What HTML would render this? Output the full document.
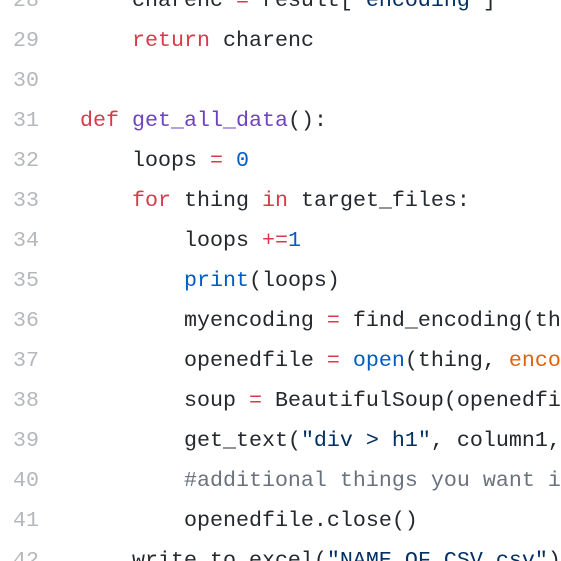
<!DOCTYPE html>
<html><head><style>
html,body{margin:0;width:561px;height:561px;overflow:hidden;background:#fff}
body{position:relative}
.w{position:absolute;top:-19px;left:0;width:561px;overflow:hidden;font-family:"Liberation Mono",monospace;font-size:21.67px;line-height:40px;color:#24292e}
.r{display:flex;height:40px;white-space:pre}
.n{width:39px;text-align:right;color:#b5b8bb;flex:none}
.c{padding-left:41px}
.k{color:#d73a49}.e{color:#6f42c1}.m{color:#005cc5}.s{color:#032f62}.cm{color:#6a737d}.p{color:#e36209}
</style></head><body><div class="w"><div class="r"><span class="n">28</span><span class="c">    charenc <span class="k">=</span> result[<span class="s">'encoding'</span>]</span></div><div class="r"><span class="n">29</span><span class="c">    <span class="k">return</span> charenc</span></div><div class="r"><span class="n">30</span><span class="c"></span></div><div class="r"><span class="n">31</span><span class="c"><span class="k">def</span> <span class="e">get_all_data</span>():</span></div><div class="r"><span class="n">32</span><span class="c">    loops <span class="k">=</span> <span class="m">0</span></span></div><div class="r"><span class="n">33</span><span class="c">    <span class="k">for</span> thing <span class="k">in</span> target_files:</span></div><div class="r"><span class="n">34</span><span class="c">        loops <span class="k">+=</span><span class="m">1</span></span></div><div class="r"><span class="n">35</span><span class="c">        <span class="m">print</span>(loops)</span></div><div class="r"><span class="n">36</span><span class="c">        myencoding <span class="k">=</span> find_encoding(thing)</span></div><div class="r"><span class="n">37</span><span class="c">        openedfile <span class="k">=</span> <span class="m">open</span>(thing, <span class="p">encoding</span><span class="k">=</span>myencoding)</span></div><div class="r"><span class="n">38</span><span class="c">        soup <span class="k">=</span> BeautifulSoup(openedfile)</span></div><div class="r"><span class="n">39</span><span class="c">        get_text(<span class="s">"div &gt; h1"</span>, column1, soup)</span></div><div class="r"><span class="n">40</span><span class="c">        <span class="cm">#additional things you want in</span></span></div><div class="r"><span class="n">41</span><span class="c">        openedfile.close()</span></div><div class="r"><span class="n">42</span><span class="c">    write_to_excel(<span class="s">"NAME_OF_CSV.csv"</span>)</span></div></div></body></html>
